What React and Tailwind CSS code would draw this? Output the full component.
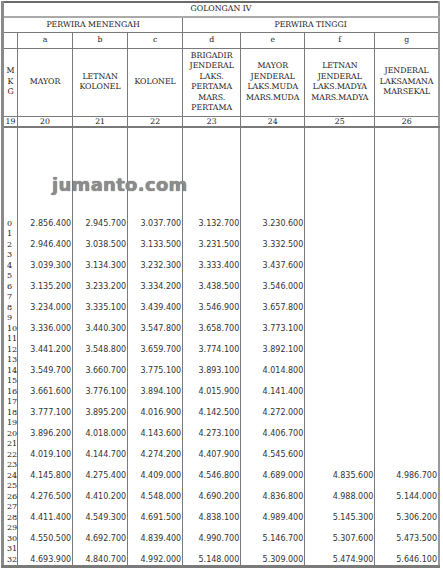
import React from 'react';

const serif = { fontFamily: '"DejaVu Serif", "Liberation Serif", serif' };
const sans = { fontFamily: '"DejaVu Sans", Verdana, sans-serif' };

const rows = [
  ['0', '1', '2.856.400', '2.945.700', '3.037.700', '3.132.700', '3.230.600', '', ''],
  ['2', '3', '2.946.400', '3.038.500', '3.133.500', '3.231.500', '3.332.500', '', ''],
  ['4', '5', '3.039.300', '3.134.300', '3.232.300', '3.333.400', '3.437.600', '', ''],
  ['6', '7', '3.135.200', '3.233.200', '3.334.200', '3.438.500', '3.546.000', '', ''],
  ['8', '9', '3.234.000', '3.335.100', '3.439.400', '3.546.900', '3.657.800', '', ''],
  ['10', '11', '3.336.000', '3.440.300', '3.547.800', '3.658.700', '3.773.100', '', ''],
  ['12', '13', '3.441.200', '3.548.800', '3.659.700', '3.774.100', '3.892.100', '', ''],
  ['14', '15', '3.549.700', '3.660.700', '3.775.100', '3.893.100', '4.014.800', '', ''],
  ['16', '17', '3.661.600', '3.776.100', '3.894.100', '4.015.900', '4.141.400', '', ''],
  ['18', '19', '3.777.100', '3.895.200', '4.016.900', '4.142.500', '4.272.000', '', ''],
  ['20', '21', '3.896.200', '4.018.000', '4.143.600', '4.273.100', '4.406.700', '', ''],
  ['22', '23', '4.019.100', '4.144.700', '4.274.200', '4.407.900', '4.545.600', '', ''],
  ['24', '25', '4.145.800', '4.275.400', '4.409.000', '4.546.800', '4.689.000', '4.835.600', '4.986.700'],
  ['26', '27', '4.276.500', '4.410.200', '4.548.000', '4.690.200', '4.836.800', '4.988.000', '5.144.000'],
  ['28', '29', '4.411.400', '4.549.300', '4.691.500', '4.838.100', '4.989.400', '5.145.300', '5.306.200'],
  ['30', '31', '4.550.500', '4.692.700', '4.839.400', '4.990.700', '5.146.700', '5.307.600', '5.473.500'],
  ['32', '', '4.693.900', '4.840.700', '4.992.000', '5.148.000', '5.309.000', '5.474.900', '5.646.100'],
];

const widths = [15, 55, 55, 55, 58, 64, 70, 64];

const ranks = [
  ['MAYOR'],
  ['LETNAN', 'KOLONEL'],
  ['KOLONEL'],
  ['BRIGADIR', 'JENDERAL', 'LAKS.', 'PERTAMA', 'MARS.', 'PERTAMA'],
  ['MAYOR', 'JENDERAL', 'LAKS.MUDA', 'MARS.MUDA'],
  ['LETNAN', 'JENDERAL', 'LAKS.MADYA', 'MARS.MADYA'],
  ['JENDERAL', 'LAKSAMANA', 'MARSEKAL'],
];

const cell = 'border border-[#7a7a7a] p-0';
const bodyCell = 'border-x border-[#7a7a7a] p-0 align-top';

export default function App() {
  return (
    <div className="bg-white w-[443px] h-[571px] pl-px pt-px text-[#222]">
      <div className="relative w-[439px]">
        <table
          className="table-fixed border-collapse w-[439px] border-l-[3px] border-l-[#8a8a8a] border-l-double border-r-2 border-r-[#9a9a9a] border-t-2 border-t-[#6a6a6a] border-b-[3px] border-b-double border-b-[#7a7a7a]"
          style={serif}
        >
          <colgroup>
            {widths.map((w, i) => (
              <col key={i} style={{ width: w }} />
            ))}
          </colgroup>
          <thead className="text-[7.8px] leading-[10.5px]">
            <tr className="h-[15px]">
              <td colSpan={8} className={`${cell} border-b-2 border-b-[#aaa] text-center`}>
                GOLONGAN IV
              </td>
            </tr>
            <tr className="h-[15px]">
              <td colSpan={4} className={`${cell} text-center`}>PERWIRA MENENGAH</td>
              <td colSpan={4} className={`${cell} text-center`}>PERWIRA TINGGI</td>
            </tr>
            <tr className="h-[16px]">
              <td className={cell}></td>
              {['a', 'b', 'c', 'd', 'e', 'f', 'g'].map((l) => (
                <td key={l} className={`${cell} text-center`}>{l}</td>
              ))}
            </tr>
            <tr className="h-[68px]">
              <td className={`${cell} text-center`}>
                M<br />K<br />G
              </td>
              {ranks.map((lines, i) => (
                <td key={i} className={`${cell} text-center`}>
                  {lines.map((t, j) => (
                    <div key={j}>{t}</div>
                  ))}
                </td>
              ))}
            </tr>
            <tr className="h-[10px]">
              {[19, 20, 21, 22, 23, 24, 25, 26].map((n) => (
                <td key={n} className={`${cell} border-b-2 text-center leading-[9px]`}>{n}</td>
              ))}
            </tr>
          </thead>
          <tbody className="text-[8px] leading-[10.5px]">
            <tr className="h-[92px]">
              {widths.map((_, i) => (
                <td key={i} className={bodyCell}></td>
              ))}
            </tr>
            {rows.map((r) => (
              <tr key={r[0]}>
                <td className={`${bodyCell} pl-[3px]`}>
                  <div>{r[0]}</div>
                  {r[1] && <div>{r[1]}</div>}
                </td>
                {r.slice(2).map((v, i) => (
                  <td key={i} className={`${bodyCell} text-right pr-px text-[#333]`} style={sans}>
                    {v}
                  </td>
                ))}
              </tr>
            ))}
          </tbody>
        </table>
        <div
          className="absolute left-[51px] top-[170px] text-[18px] font-bold text-[#8c8c8c] tracking-[0.3px]"
          style={{ ...sans, textShadow: '0 0 1px #555' }}
        >
          jumanto.com
        </div>
      </div>
    </div>
  );
}
